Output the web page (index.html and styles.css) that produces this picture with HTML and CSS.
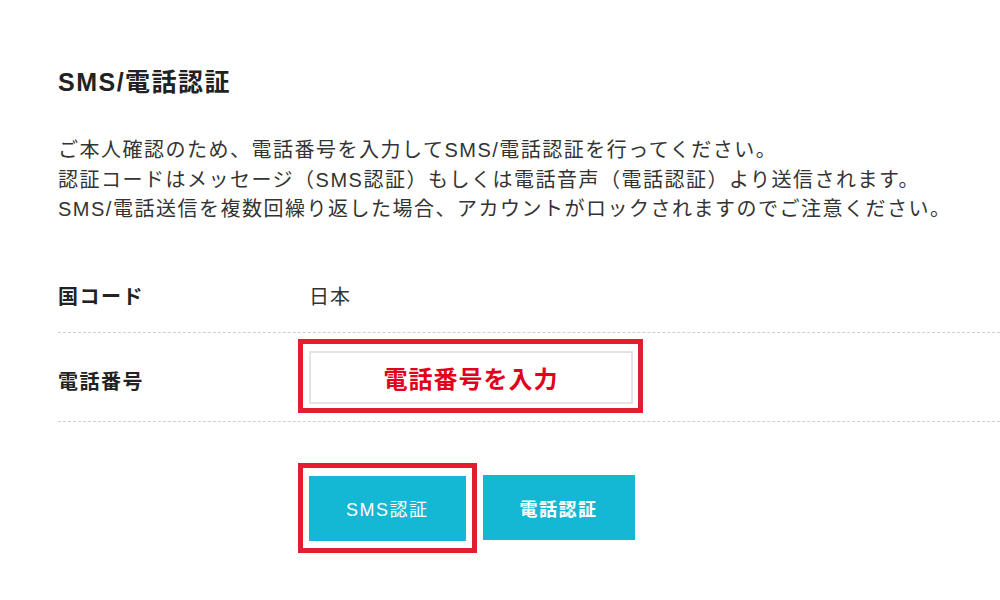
FILE: index.html
```html
<!DOCTYPE html>
<html lang="ja">
<head>
<meta charset="utf-8">
<title>SMS/電話認証</title>
<link rel="stylesheet" href="styles.css">
</head>
<body>
<main class="page">
  <h1 class="title">SMS/電話認証</h1>
  <p class="lead">ご本人確認のため、電話番号を入力してSMS/電話認証を行ってください。<br>認証コードはメッセージ（SMS認証）もしくは電話音声（電話認証）より送信されます。<br>SMS/電話送信を複数回繰り返した場合、アカウントがロックされますのでご注意ください。</p>
  <div class="form">
    <div class="row row-country">
      <div class="label">国コード</div>
      <div class="value">日本</div>
    </div>
    <div class="row row-phone">
      <div class="label label-phone">電話番号</div>
      <div class="frame frame-input">
        <div class="input">電話番号を入力</div>
      </div>
    </div>
  </div>
  <div class="actions">
    <div class="frame frame-button">
      <button class="btn btn-sms" type="button">SMS認証</button>
    </div>
    <button class="btn btn-tel" type="button">電話認証</button>
  </div>
</main>
</body>
</html>
```
FILE: styles.css
```css
html, body {
  margin: 0;
  padding: 0;
  background: #ffffff;
}

body {
  font-family: "Liberation Sans", "Noto Sans CJK JP", sans-serif;
  color: #333333;
}

.page {
  padding: 65px 0 0 58px;
}

.title {
  margin: 0;
  font-size: 25px;
  line-height: 34px;
  font-weight: 700;
  letter-spacing: 1.5px;
  color: #222222;
}

.lead {
  margin: 37px 0 0;
  font-size: 20px;
  line-height: 29.5px;
  letter-spacing: 1.5px;
  color: #333333;
}

.form {
  margin-top: 37px;
}

.row {
  display: grid;
  grid-template-columns: 240px 1fr;
  border-bottom: 1px dashed #cfcfcf;
}

.row-country {
  height: 70px;
  align-items: center;
}

.row-phone {
  height: 89px;
  box-sizing: border-box;
  align-items: start;
  padding-top: 6px;
}

.label {
  font-size: 20px;
  line-height: 28px;
  font-weight: 700;
  letter-spacing: 1.5px;
  color: #222222;
}

.label-phone {
  align-self: center;
  padding-top: 5px;
}

.value {
  padding-left: 11px;
  font-size: 20px;
  line-height: 28px;
  letter-spacing: 1px;
  color: #333333;
}

.frame {
  border: 5px solid #e11d2e;
  width: max-content;
}

.frame-input {
  padding: 7px 5px 4px 6px;
}

.input {
  box-sizing: border-box;
  width: 324px;
  height: 53px;
  border: 2px solid #e3e3e3;
  display: flex;
  align-items: center;
  justify-content: center;
  font-size: 24px;
  font-weight: 700;
  letter-spacing: 1px;
  color: #e3001b;
}

.actions {
  margin-top: 41px;
  padding-left: 240px;
  display: flex;
  align-items: center;
  gap: 6px;
}

.frame-button {
  padding: 8px 6px 7px 6px;
}

.btn {
  display: block;
  height: 65px;
  padding: 0 37px;
  border: 0;
  margin: 0;
  background: #14b7d4;
  color: #ffffff;
  font-family: "Liberation Sans", "Noto Sans CJK JP", sans-serif;
  font-size: 18px;
  letter-spacing: 1.5px;
  cursor: pointer;
}

.btn-sms {
  font-weight: 400;
}

.btn-tel {
  font-weight: 700;
}
```
